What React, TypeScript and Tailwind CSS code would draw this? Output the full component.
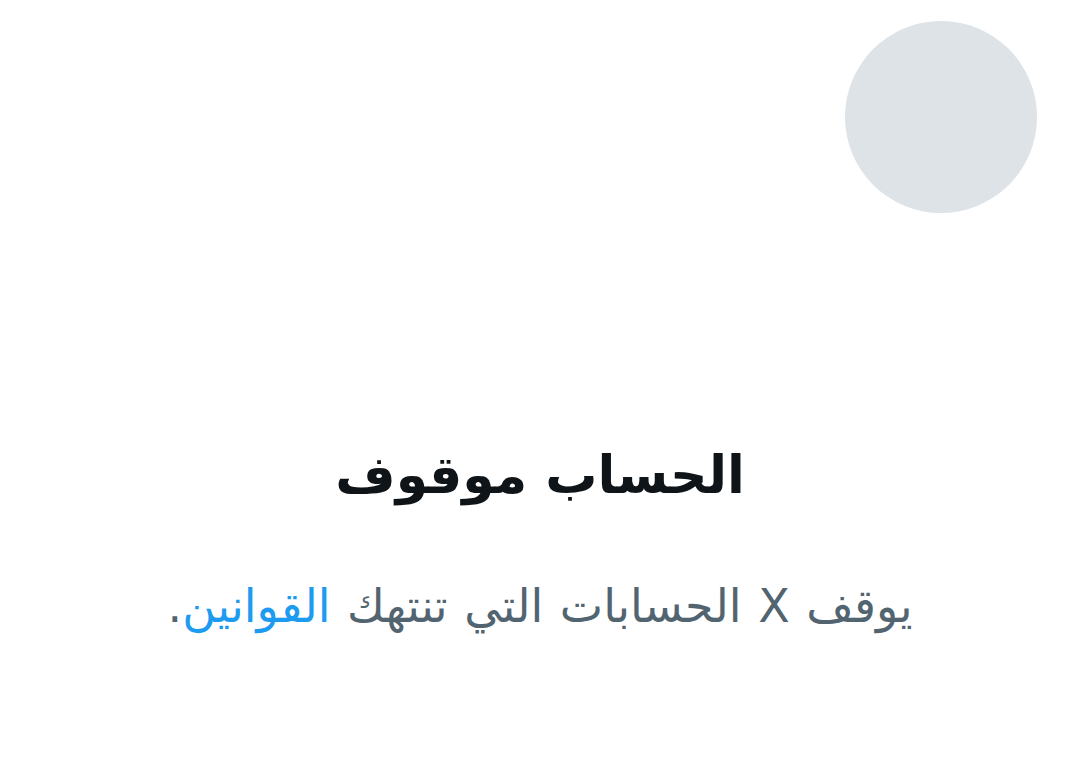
import React from 'react';

export default function App() {
  return (
    <div
      dir="rtl"
      className="w-[1080px] h-[775px] bg-white flex flex-col overflow-hidden"
      style={{ fontFamily: '"DejaVu Sans", "Noto Sans", sans-serif' }}
    >
      {/* Header with avatar placeholder */}
      <div className="flex justify-start pt-[21px] pr-[43px]">
        <div className="w-[192px] h-[192px] rounded-full bg-[#dee3e8]" />
      </div>

      {/* Suspended message */}
      <div className="flex flex-col items-center mt-[230px]">
        <h1 className="text-[52px] font-bold leading-[64px] text-[#0f1419]">الحساب موقوف</h1>
        <p className="mt-[71px] text-[46px] leading-[56px] [word-spacing:2px] text-[#536471]">
          يوقف X الحسابات التي تنتهك <span className="text-[#1d9bf0]">القوانين</span>.
        </p>
      </div>
    </div>
  );
}
